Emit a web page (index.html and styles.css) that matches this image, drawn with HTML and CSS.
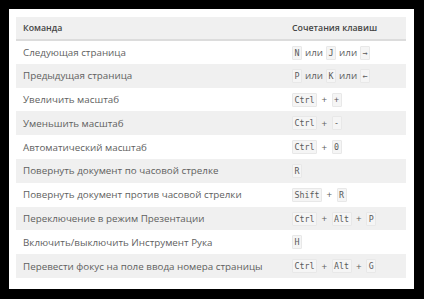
FILE: index.html
```html
<!DOCTYPE html>
<html lang="ru">
<head>
<meta charset="utf-8">
<link rel="stylesheet" href="styles.css">
</head>
<body>
<div class="panel">
<table class="keys">
<thead>
<tr><th class="cmd">Команда</th><th class="combo">Сочетания клавиш</th></tr>
</thead>
<tbody>
<tr><td>Следующая страница</td><td><kbd>N</kbd><span class="sep">или</span><kbd>J</kbd><span class="sep">или</span><kbd>→</kbd></td></tr>
<tr><td>Предыдущая страница</td><td><kbd>P</kbd><span class="sep">или</span><kbd>K</kbd><span class="sep">или</span><kbd>←</kbd></td></tr>
<tr><td>Увеличить масштаб</td><td><kbd>Ctrl</kbd><span class="sep plus">+</span><kbd>+</kbd></td></tr>
<tr><td>Уменьшить масштаб</td><td><kbd>Ctrl</kbd><span class="sep plus">+</span><kbd>-</kbd></td></tr>
<tr><td>Автоматический масштаб</td><td><kbd>Ctrl</kbd><span class="sep plus">+</span><kbd>0</kbd></td></tr>
<tr><td>Повернуть документ по часовой стрелке</td><td><kbd>R</kbd></td></tr>
<tr><td>Повернуть документ против часовой стрелки</td><td><kbd>Shift</kbd><span class="sep plus">+</span><kbd>R</kbd></td></tr>
<tr><td>Переключение в режим Презентации</td><td><kbd>Ctrl</kbd><span class="sep plus">+</span><kbd>Alt</kbd><span class="sep plus">+</span><kbd>P</kbd></td></tr>
<tr><td>Включить/выключить Инструмент Рука</td><td><kbd>H</kbd></td></tr>
<tr><td>Перевести фокус на поле ввода номера страницы</td><td><kbd>Ctrl</kbd><span class="sep plus">+</span><kbd>Alt</kbd><span class="sep plus">+</span><kbd>G</kbd></td></tr>
</tbody>
</table>
</div>
</body>
</html>
```
FILE: styles.css
```css
html, body {
  margin: 0;
  padding: 0;
  background: #000;
}
body {
  padding: 9px 10px 10px 9px;
  font-family: "Open Sans", "Noto Sans", sans-serif;
  color: #5f5f5f;
}
.panel {
  background: #fff;
  width: 405px;
  height: 280px;
  box-sizing: border-box;
  padding: 8px 8px 10px 7px;
}
.keys {
  width: 390px;
  border-collapse: collapse;
  font-size: 9.8px;
}
.keys th {
  background: #f0f0f0;
  text-align: left;
  font-weight: 600;
  font-size: 8.8px;
  color: #454545;
  height: 22px;
  padding: 0 7px;
  border-bottom: 2px solid #dcdcdc;
}
.keys td {
  height: 23.8px;
  padding: 0 7px;
  box-sizing: border-box;
  white-space: nowrap;
}
.keys tbody tr:nth-child(even) td {
  background: #f0f0f0;
}
.keys .combo {
  width: 107px;
}
kbd {
  display: inline-block;
  font-family: "DejaVu Sans Mono", "Liberation Mono", monospace;
  font-size: 8.3px;
  line-height: 12px;
  padding: 0 1.5px;
  background: #f5f5f5;
  border: 1px solid #e8e8e8;
  border-radius: 1px;
  color: #5a5a5a;
  vertical-align: middle;
}
.sep {
  display: inline-block;
  margin: 0 3px;
  vertical-align: middle;
}
.sep.plus {
  margin: 0 4.5px;
}
```
